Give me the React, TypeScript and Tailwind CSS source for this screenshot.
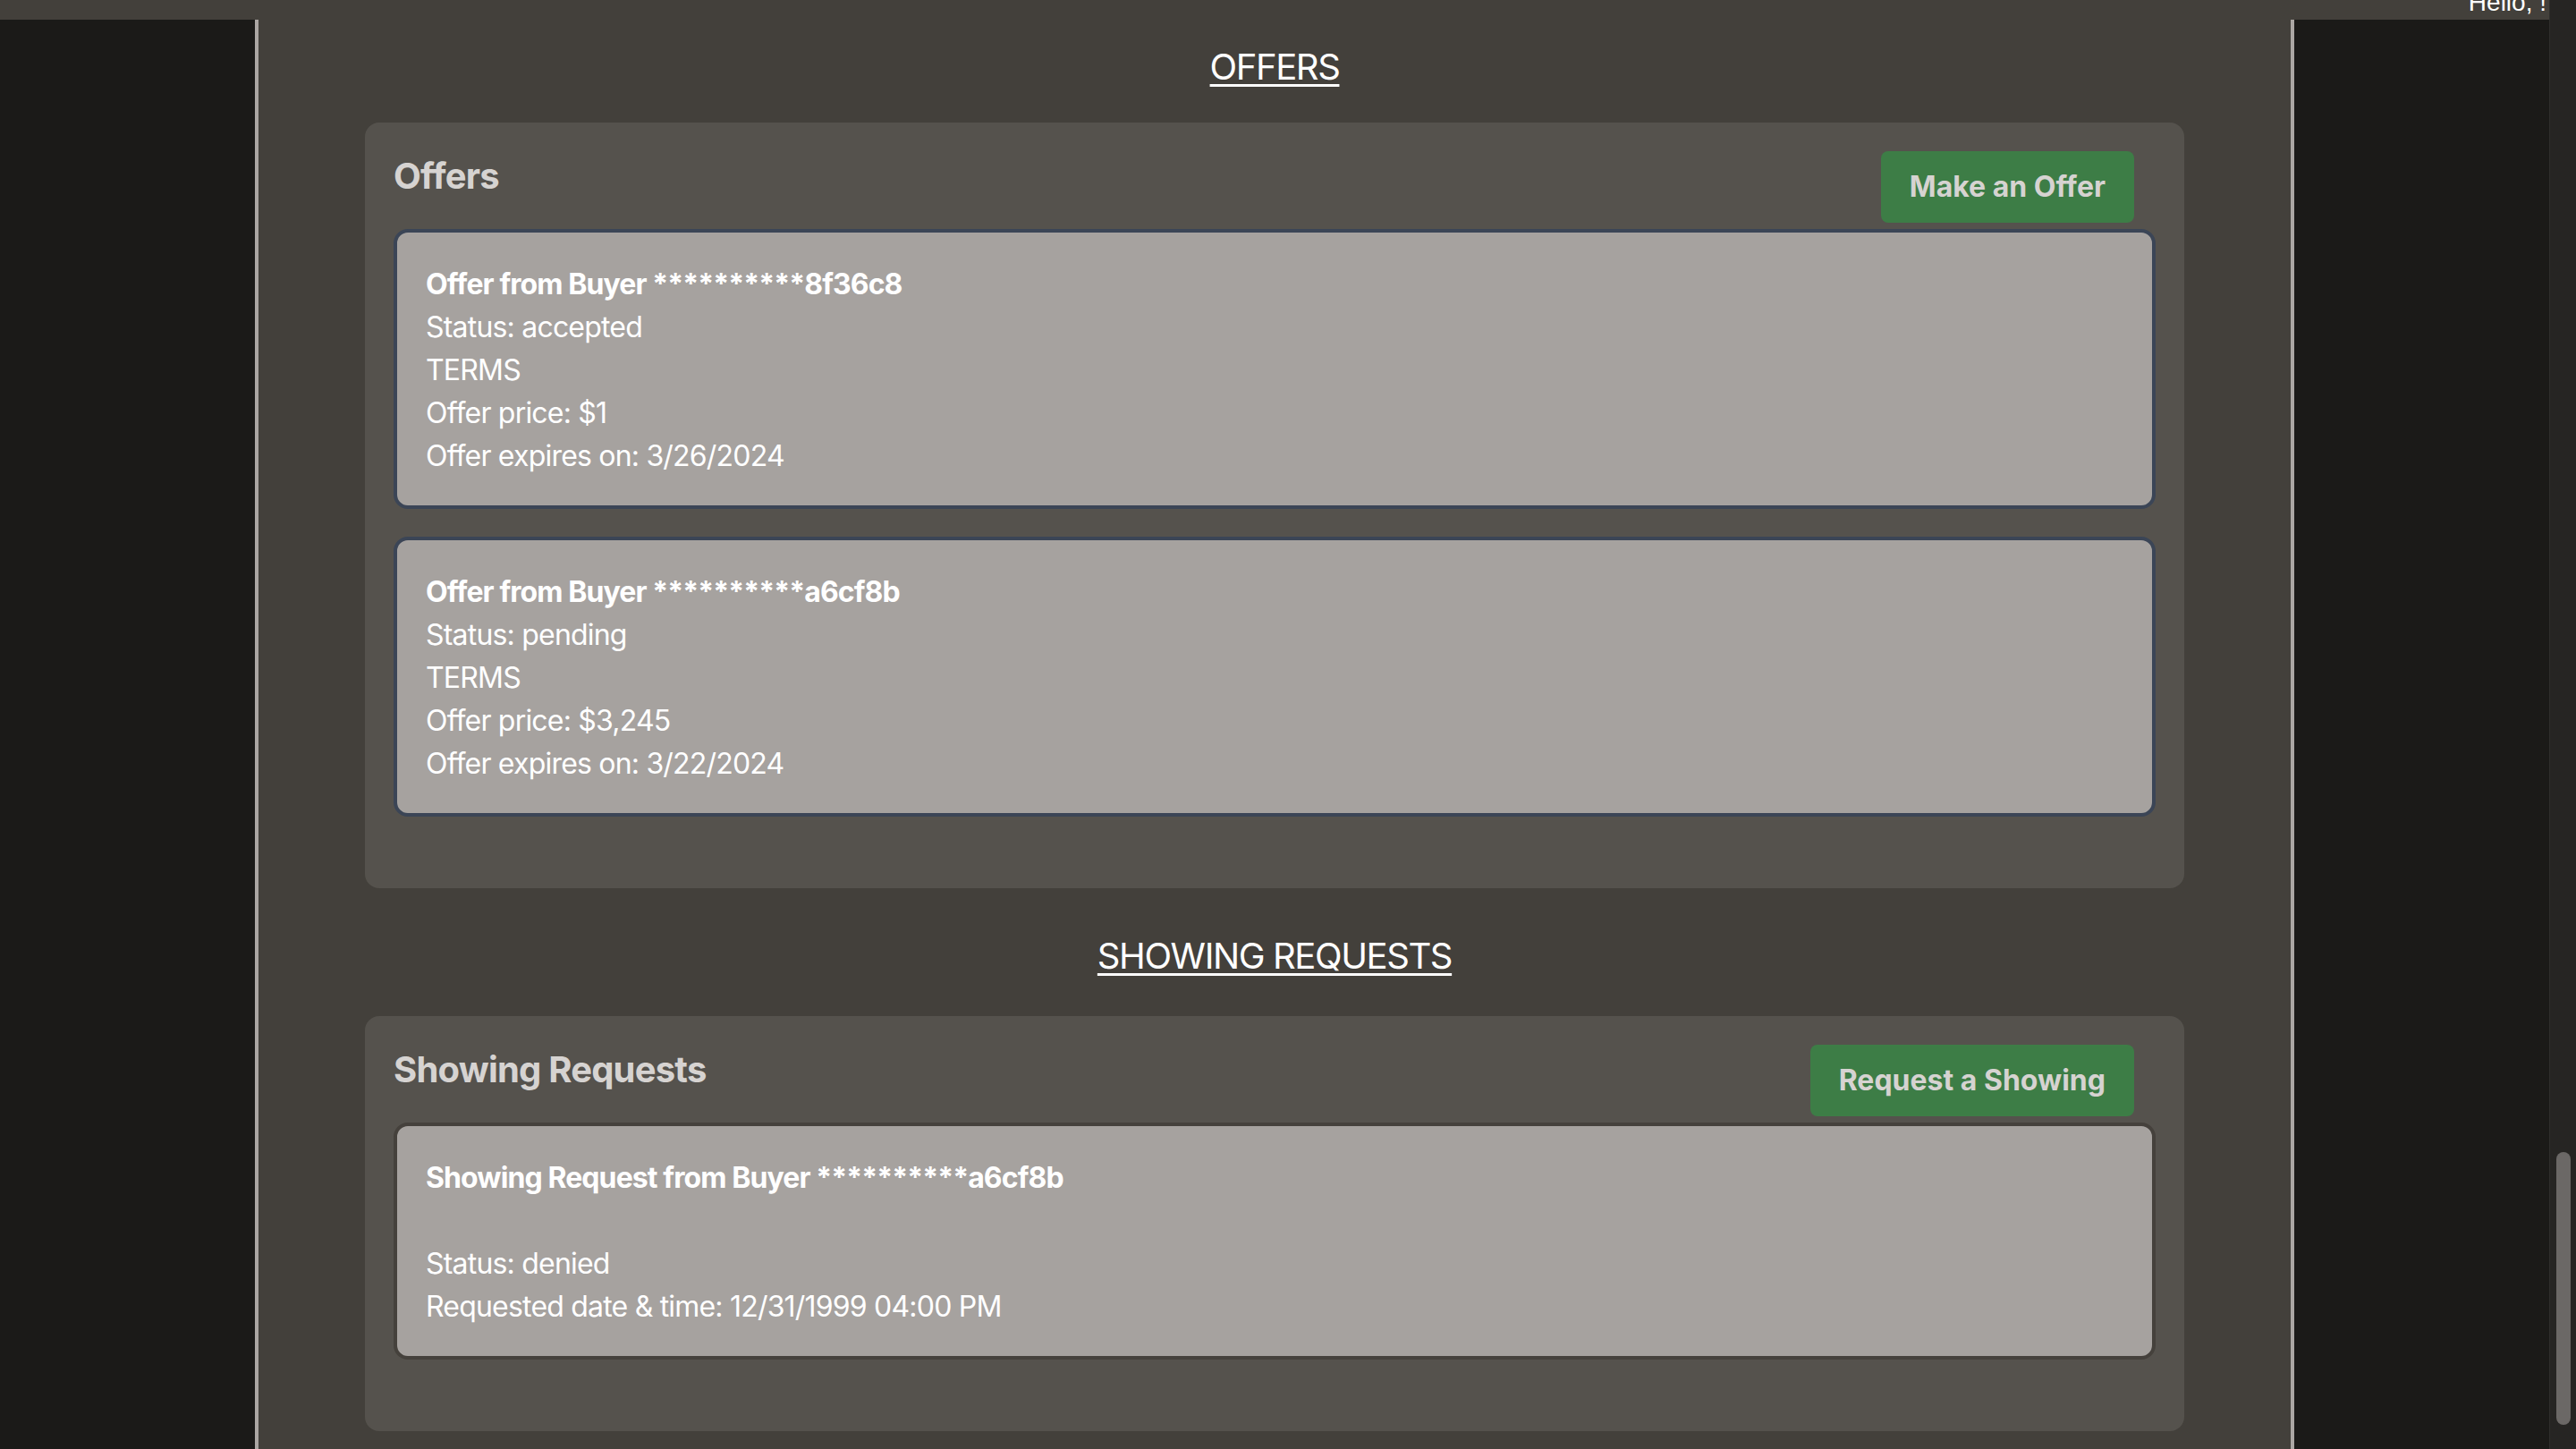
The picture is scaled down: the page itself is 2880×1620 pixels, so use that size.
const offers = [
  {
    buyer: "**********8f36c8",
    status: "accepted",
    price: "$1",
    expires: "3/26/2024",
  },
  {
    buyer: "**********a6cf8b",
    status: "pending",
    price: "$3,245",
    expires: "3/22/2024",
  },
];

const showings = [
  {
    buyer: "**********a6cf8b",
    status: "denied",
    when: "12/31/1999 04:00 PM",
  },
];

function SectionHeading({ children, className = "" }: { children: React.ReactNode; className?: string }) {
  return (
    <h2 className={`text-center text-[40px] leading-[60px] tracking-[-1.4px] text-white underline decoration-[3px] underline-offset-[5px] ${className}`}>
      {children}
    </h2>
  );
}

function Panel({ title, action, children }: { title: string; action: string; children: React.ReactNode }) {
  return (
    <div className="mx-[119px] rounded-[16px] bg-[#55524d] px-8 pt-8 pb-[80px]">
      <div className="mb-[7px] flex items-start justify-between">
        <h3 className="text-[40px] leading-[56px] font-bold tracking-[-0.8px] text-[#d6d3d1]">{title}</h3>
        <button
          type="button"
          className="mr-6 rounded-lg bg-[#3d7d46] px-8 py-4 text-[32px] leading-[48px] font-bold text-[#d6d3d1]"
        >
          {action}
        </button>
      </div>
      {children}
    </div>
  );
}

export default function App() {
  return (
    <div className="flex h-[1620px] w-[2880px] overflow-hidden bg-[#1b1a18] font-['Inter','Noto_Sans',sans-serif]">
      <div className="flex w-[2850px] flex-col">
        {/* top bar, mostly scrolled away */}
        <div className="flex h-[22px] shrink-0 justify-end overflow-hidden bg-[#43403b] pr-[3px]">
          <span className="-mt-[11px] font-['Liberation_Sans',Arial,sans-serif] text-[28px] leading-none text-white">
            Hello, !
          </span>
        </div>

        <div className="flex flex-1">
          <div className="w-[285px] shrink-0 bg-[#1b1a18]" />
          <div className="w-[4px] shrink-0 bg-[#aba6a3]" />

          <main className="flex-1 bg-[#43403b] pt-[23px]">
            <SectionHeading className="mb-8">OFFERS</SectionHeading>

            <Panel title="Offers" action="Make an Offer">
              <div className="flex flex-col gap-[31px]">
                {offers.map(o => (
                  <div
                    key={o.buyer}
                    className="rounded-[16px] border-4 border-[#3b4556] bg-[#a6a29f] px-8 pt-[34px] pb-[31px] text-[32px] leading-[48px] tracking-[-0.8px] text-white"
                  >
                    <p className="font-bold tracking-[-0.9px]">Offer from Buyer {o.buyer}</p>
                    <p>Status: {o.status}</p>
                    <p>TERMS</p>
                    <p>Offer price: {o.price}</p>
                    <p>Offer expires on: {o.expires}</p>
                  </div>
                ))}
              </div>
            </Panel>

            <SectionHeading className="mt-[46px] mb-[37px]">SHOWING REQUESTS</SectionHeading>

            <Panel title="Showing Requests" action="Request a Showing">
              {showings.map(s => (
                <div
                  key={s.buyer}
                  className="rounded-[16px] border-4 border-[#45413c] bg-[#a6a29f] px-8 pt-[34px] pb-[31px] text-[32px] leading-[48px] tracking-[-0.8px] text-white"
                >
                  <p className="font-bold tracking-[-0.9px]">Showing Request from Buyer {s.buyer}</p>
                  <p className="h-[48px]" />
                  <p>Status: {s.status}</p>
                  <p>Requested date &amp; time: {s.when}</p>
                </div>
              ))}
            </Panel>
          </main>

          <div className="w-[4px] shrink-0 bg-[#aba6a3]" />
          <div className="w-[285px] shrink-0 bg-[#1b1a18]" />
        </div>
      </div>

      {/* scrollbar */}
      <div className="flex w-[30px] shrink-0 flex-col border-l border-[#2f2e2c] bg-[#262523] pt-[1288px] pl-[7px]">
        <div className="h-[305px] w-[16px] rounded-full bg-[#6b6866]" />
      </div>
    </div>
  );
}
